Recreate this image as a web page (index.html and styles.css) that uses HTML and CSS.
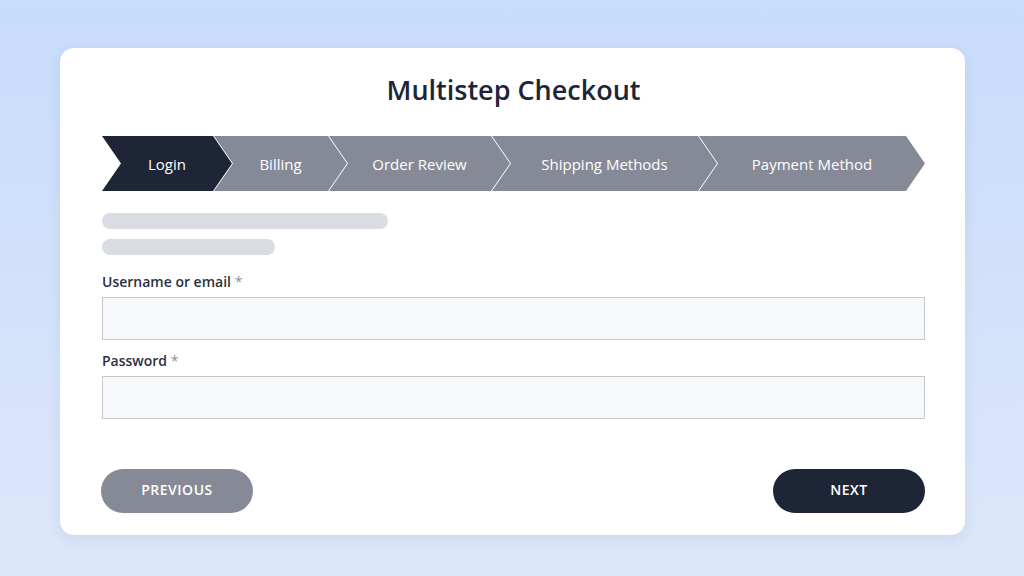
FILE: index.html
```html
<!DOCTYPE html>
<html lang="en">
<head>
  <meta charset="UTF-8" />
  <meta name="viewport" content="width=device-width, initial-scale=1.0"/>
  <title>Multistep Checkout</title>
  <link rel="stylesheet" href="styles.css">
</head>
<body>
  <div class="card">
    <h1>Multistep Checkout</h1>

    <!-- Steps -->
    <div class="steps">
      <div class="step active" style="width: 130px;">Login</div>
      <div class="step" style="width: 133px;">Billing</div>
      <div class="step" style="width: 181px;">Order Review</div>
      <div class="step" style="width: 225px;">Shipping Methods</div>
      <div class="step" style="width: 226px;">Payment Method</div>
    </div>

    <!-- Intro text placeholder -->
    <div class="skeleton long"></div>
    <div class="skeleton short"></div>

    <!-- Login form -->
    <label for="username">Username or email <span class="req">*</span></label>
    <input type="text" id="username">
    <label for="password">Password <span class="req">*</span></label>
    <input type="password" id="password">

    <div class="actions">
      <button class="btn prev">Previous</button>
      <button class="btn next">Next</button>
    </div>
  </div>
</body>
</html>
```

FILE: styles.css
```css
body {
  font-family: 'Open Sans', sans-serif;
  background: linear-gradient(180deg, #c8dcfb 0%, #dde7fa 100%);
  color: #1e2537;
  margin: 0;
  padding: 0;
  min-height: 100vh;
}
.card {
  width: 905px;
  height: 487px;
  box-sizing: border-box;
  margin: 48px 0 0 60px;
  padding: 20px 40px 0 42px;
  background-color: #fff;
  border-radius: 14px;
  box-shadow: 0 4px 14px rgba(90, 110, 150, 0.12);
}
h1 {
  font-size: 27px;
  font-weight: 600;
  margin: 0 0 24px;
  line-height: 44px;
  text-align: center;
  color: #1e2537;
}
.steps {
  display: flex;
  height: 55px;
  margin-bottom: 22px;
}
.step {
  flex: none;
  display: flex;
  align-items: center;
  justify-content: center;
  height: 55px;
  background-color: #858a96;
  color: #fff;
  font-size: 15px;
  clip-path: polygon(0 0, calc(100% - 19px) 0, 100% 50%, calc(100% - 19px) 100%, 0 100%, 19px 50%);
}
.step + .step {
  margin-left: -18px;
}
.step.active {
  background-color: #1e2537;
}
.skeleton {
  height: 16px;
  border-radius: 8px;
  background-color: #d9dce3;
  margin-bottom: 10px;
}
.skeleton.long {
  width: 286px;
}
.skeleton.short {
  width: 173px;
  margin-bottom: 16px;
}
label {
  display: block;
  font-size: 14px;
  font-weight: 600;
  color: #2b3040;
  line-height: 22px;
  margin-bottom: 4px;
}
.req {
  color: #8a8f99;
  font-weight: 400;
}
input {
  display: block;
  width: 100%;
  height: 43px;
  box-sizing: border-box;
  border: 1px solid #c6c9d0;
  background-color: #f7f8fa;
  margin: 0 0 10px;
  padding: 0 12px;
  font-family: inherit;
  font-size: 14px;
}
.actions {
  display: flex;
  justify-content: space-between;
  margin-top: 50px;
}
.btn {
  width: 152px;
  height: 44px;
  border: none;
  border-radius: 22px;
  color: #fff;
  font-family: inherit;
  font-size: 14px;
  font-weight: 600;
  letter-spacing: 0.5px;
  text-transform: uppercase;
  line-height: 42px;
  padding: 0 0 2px;
  cursor: pointer;
}
.btn.prev {
  background-color: #858a96;
  margin-left: -1px;
}
.btn.next {
  background-color: #1e2537;
}
```
